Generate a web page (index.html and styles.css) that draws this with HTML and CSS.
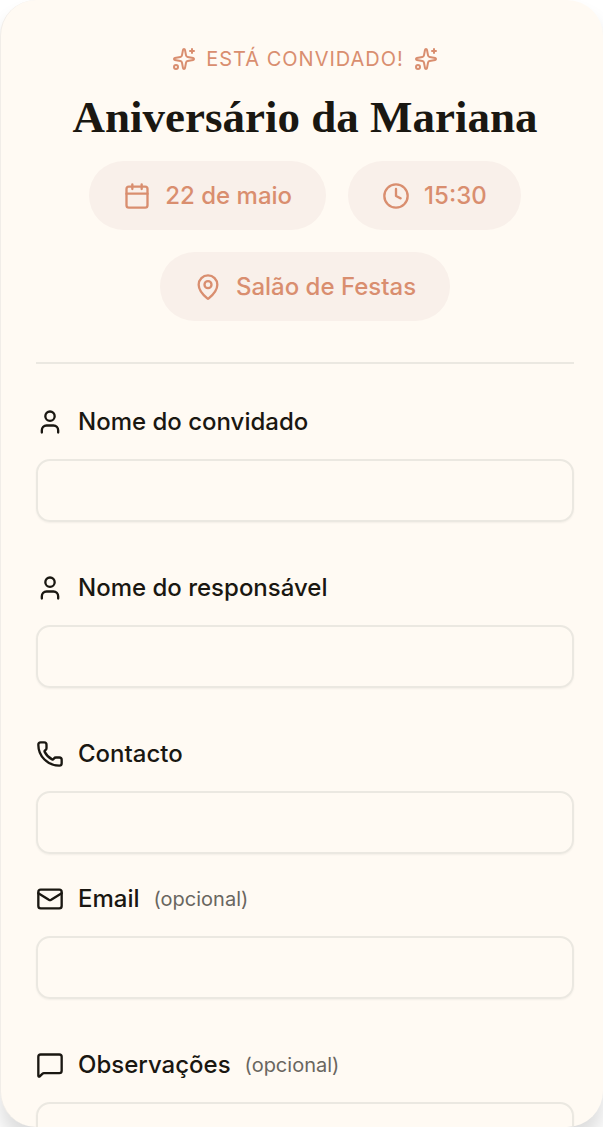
FILE: index.html
```html
<!DOCTYPE html>
<html lang="pt">
<head>
    <meta charset="UTF-8">
    <meta name="viewport" content="width=device-width, initial-scale=1.0">
    <title>Aniversário da Mariana</title>
    <link rel="stylesheet" href="styles.css">
</head>
<body>
    <!-- Shared icon shapes -->
    <svg class="icon-defs" aria-hidden="true">
        <symbol id="icon-sparkles" viewBox="0 0 24 24">
            <path d="M11.017 2.814a1 1 0 0 1 1.966 0l1.051 5.558a2 2 0 0 0 1.594 1.594l5.558 1.051a1 1 0 0 1 0 1.966l-5.558 1.051a2 2 0 0 0-1.594 1.594l-1.051 5.558a1 1 0 0 1-1.966 0l-1.051-5.558a2 2 0 0 0-1.594-1.594l-5.558-1.051a1 1 0 0 1 0-1.966l5.558-1.051a2 2 0 0 0 1.594-1.594z"/>
            <path d="M20 2v4M22 4h-4"/>
            <circle cx="4" cy="20" r="2"/>
        </symbol>
        <symbol id="icon-user" viewBox="0 0 24 24">
            <path d="M19 21v-2a4 4 0 0 0-4-4H9a4 4 0 0 0-4 4v2"/>
            <circle cx="12" cy="7" r="4"/>
        </symbol>
    </svg>

    <main class="card">
        <header class="header">
            <p class="eyebrow">
                <svg class="icon icon-small" aria-hidden="true"><use href="#icon-sparkles"/></svg>
                <span>ESTÁ CONVIDADO!</span>
                <svg class="icon icon-small" aria-hidden="true"><use href="#icon-sparkles"/></svg>
            </p>
            <h1>Aniversário da Mariana</h1>
            <div class="details">
                <span class="pill">
                    <svg class="icon" viewBox="0 0 24 24" aria-hidden="true">
                        <path d="M8 2v4M16 2v4M3 10h18"/>
                        <rect x="3" y="4" width="18" height="18" rx="2"/>
                    </svg>
                    22 de maio
                </span>
                <span class="pill">
                    <svg class="icon" viewBox="0 0 24 24" aria-hidden="true">
                        <circle cx="12" cy="12" r="10"/>
                        <path d="M12 6v6l4 2"/>
                    </svg>
                    15:30
                </span>
                <span class="pill">
                    <svg class="icon" viewBox="0 0 24 24" aria-hidden="true">
                        <path d="M20 10c0 4.993-5.539 10.193-7.399 11.799a1 1 0 0 1-1.202 0C9.539 20.193 4 14.993 4 10a8 8 0 0 1 16 0"/>
                        <circle cx="12" cy="10" r="3"/>
                    </svg>
                    Salão de Festas
                </span>
            </div>
        </header>

        <form class="form">
            <div class="field">
                <label for="guest">
                    <svg class="icon" aria-hidden="true"><use href="#icon-user"/></svg>
                    Nome do convidado
                </label>
                <input type="text" id="guest" name="guest">
            </div>
            <div class="field">
                <label for="guardian">
                    <svg class="icon" aria-hidden="true"><use href="#icon-user"/></svg>
                    Nome do responsável
                </label>
                <input type="text" id="guardian" name="guardian">
            </div>
            <div class="contact-fields">
                <div class="field">
                    <label for="phone">
                        <svg class="icon" viewBox="0 0 24 24" aria-hidden="true">
                            <path d="M13.832 16.568a1 1 0 0 0 1.213-.303l.355-.465A2 2 0 0 1 17 15h3a2 2 0 0 1 2 2v3a2 2 0 0 1-2 2A18 18 0 0 1 2 4a2 2 0 0 1 2-2h3a2 2 0 0 1 2 2v3a2 2 0 0 1-.8 1.6l-.468.351a1 1 0 0 0-.292 1.233 14 14 0 0 0 6.392 6.384"/>
                        </svg>
                        Contacto
                    </label>
                    <input type="tel" id="phone" name="phone">
                </div>
                <div class="field">
                    <label for="email">
                        <svg class="icon" viewBox="0 0 24 24" aria-hidden="true">
                            <rect x="2" y="4" width="20" height="16" rx="2"/>
                            <path d="m22 7-8.991 5.727a2 2 0 0 1-2.009 0L2 7"/>
                        </svg>
                        Email
                        <span class="optional">(opcional)</span>
                    </label>
                    <input type="email" id="email" name="email">
                </div>
            </div>
            <div class="field">
                <label for="notes">
                    <svg class="icon" viewBox="0 0 24 24" aria-hidden="true">
                        <path d="M22 17a2 2 0 0 1-2 2H6.828a2 2 0 0 0-1.414.586l-2.202 2.202A.71.71 0 0 1 2 21.286V5a2 2 0 0 1 2-2h16a2 2 0 0 1 2 2z"/>
                    </svg>
                    Observações
                    <span class="optional">(opcional)</span>
                </label>
                <textarea id="notes" name="notes"></textarea>
            </div>
        </form>
    </main>
</body>
</html>
```

FILE: styles.css
```css
* {
    box-sizing: border-box;
}
body {
    margin: 0;
    background-color: #ffffff;
    color: #1a1711;
    font-family: Inter, "Liberation Sans", Arial, sans-serif;
}
.icon-defs {
    display: none;
}
.card {
    height: 100vh;
    overflow: hidden;
    padding: 45px 29px 0 35px;
    background-color: #fffaf3;
    border-left: 1px solid #f1ede8;
    border-radius: 36px;
    box-shadow: 0 16px 20px rgba(0, 0, 0, 0.14);
}
.icon {
    width: 28px;
    height: 28px;
    flex-shrink: 0;
    fill: none;
    stroke: currentColor;
    stroke-width: 2;
    stroke-linecap: round;
    stroke-linejoin: round;
}
.icon-small {
    width: 24px;
    height: 24px;
}
.header {
    padding-bottom: 41px;
    border-bottom: 2px solid #ebe8e1;
    text-align: center;
}
.eyebrow {
    display: flex;
    justify-content: center;
    align-items: center;
    gap: 10px;
    margin: 0;
    color: #d98e6f;
    font-size: 20px;
    line-height: 28px;
    letter-spacing: 1px;
}
h1 {
    margin: 16px 0;
    font-family: "Liberation Serif", "Times New Roman", serif;
    font-size: 45px;
    font-weight: 700;
    line-height: 56px;
}
.details {
    display: flex;
    flex-wrap: wrap;
    justify-content: center;
    gap: 22px;
}
.pill {
    display: flex;
    align-items: center;
    gap: 14px;
    height: 69px;
    padding: 0 34px;
    border-radius: 35px;
    background-color: #f9f0ea;
    color: #d98e6f;
    font-size: 24px;
    font-weight: 500;
}
.form {
    display: flex;
    flex-direction: column;
    gap: 52px;
    padding-top: 44px;
}
.contact-fields {
    display: grid;
    gap: 31px;
}
.field {
    display: flex;
    flex-direction: column;
    gap: 23px;
}
label {
    display: flex;
    align-items: center;
    gap: 14px;
    font-size: 24px;
    font-weight: 500;
    line-height: 28px;
}
.optional {
    color: #69665f;
    font-size: 20px;
    font-weight: 400;
}
input,
textarea {
    width: 100%;
    height: 63px;
    padding: 0 20px;
    border: 2px solid #ebe8e1;
    border-radius: 14px;
    background-color: transparent;
    box-shadow: 0 1px 2px rgba(0, 0, 0, 0.05);
    color: inherit;
    font: inherit;
    font-size: 24px;
}
textarea {
    display: block;
    height: 140px;
    padding: 16px 20px;
    resize: none;
}
```
